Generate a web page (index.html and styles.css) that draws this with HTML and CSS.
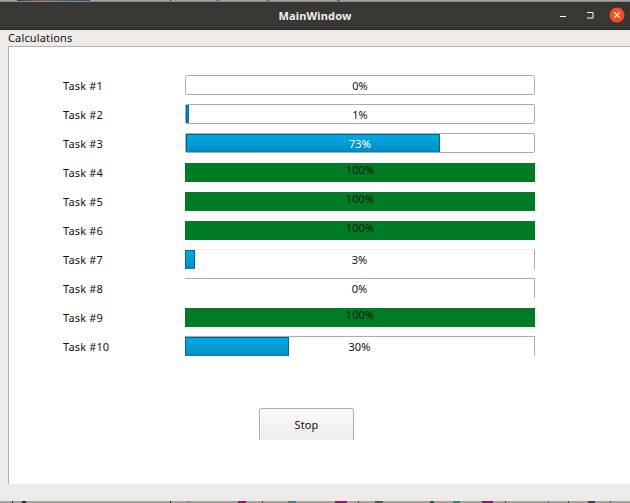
FILE: index.html
```html
<!DOCTYPE html>
<html>
<head>
  <title>MainWindow</title>
  <link rel="stylesheet" href="styles.css">
</head>
<body>
  <div class="desktop-strip strip-top"></div>
  <div class="window">
    <div class="titlebar">
      <span class="title">MainWindow</span>
      <div class="controls">
        <svg class="ctl" width="16" height="16" viewBox="0 0 16 16"><path d="M9 9.5h6" stroke="#fff" stroke-width="1" fill="none"/></svg>
        <svg class="ctl" width="16" height="16" viewBox="0 0 16 16"><path d="M7 5.5h6v5.5H7" stroke="#fff" stroke-width="1" fill="none"/></svg>
        <svg class="ctl" width="16" height="16" viewBox="0 0 16 16"><circle cx="8" cy="8" r="7.5" fill="#f04e23"/><path d="M5.4 5.4l5.2 5.2M10.6 5.4l-5.2 5.2" stroke="#fff" stroke-width="1.2" fill="none"/></svg>
      </div>
    </div>
    <div class="menubar"><span class="menu-item">Calculations</span></div>
    <div class="central">
      <div class="tasks">
        <div class="task"><span class="task-name">Task #1</span><div class="bar"><span class="pct">0%</span></div></div>
        <div class="task"><span class="task-name">Task #2</span><div class="bar"><div class="fill" style="width: 1%"></div><span class="pct">1%</span></div></div>
        <div class="task"><span class="task-name">Task #3</span><div class="bar"><div class="fill" style="width: 73%"></div><span class="pct on-fill">73%</span></div></div>
        <div class="task"><span class="task-name">Task #4</span><div class="bar done"><span class="pct">100%</span></div></div>
        <div class="task"><span class="task-name">Task #5</span><div class="bar done"><span class="pct">100%</span></div></div>
        <div class="task"><span class="task-name">Task #6</span><div class="bar done"><span class="pct">100%</span></div></div>
        <div class="task"><span class="task-name">Task #7</span><div class="bar faded-top"><div class="fill" style="width: 3%"></div><span class="pct">3%</span></div></div>
        <div class="task"><span class="task-name">Task #8</span><div class="bar open"><span class="pct">0%</span></div></div>
        <div class="task"><span class="task-name">Task #9</span><div class="bar done"><span class="pct">100%</span></div></div>
        <div class="task"><span class="task-name">Task #10</span><div class="bar open"><div class="fill" style="width: 29.7%"></div><span class="pct">30%</span></div></div>
      </div>
      <button class="stop" type="button">Stop</button>
    </div>
    <div class="statusbar"></div>
  </div>
  <div class="desktop-strip strip-bottom"></div>
</body>
</html>
```

FILE: styles.css
```css
html, body {
  margin: 0;
  padding: 0;
}
body {
  width: 630px;
  height: 503px;
  overflow: hidden;
  display: flex;
  flex-direction: column;
  background-color: #a5a3a0;
  font-family: "Noto Sans", sans-serif;
  font-size: 11px;
  letter-spacing: 0.15px;
  color: #111;
}
/* bits of whatever is behind the window */
.desktop-strip {
  flex: none;
  height: 1px;
  background-color: #a5a3a0;
}
.strip-top {
  background-image: linear-gradient(90deg,
    transparent 17px, #2d3a5a 17px, #8a5a4a 40px, #3a6a7a 60px, #5a3a6a 90px, transparent 90px,
    transparent 170px, #222 170px, #222 171px, transparent 171px,
    transparent 216px, #3a8a9a 216px, #3a8a9a 219px, transparent 219px,
    transparent 266px, #3a8a5a 266px, #3a8a5a 269px, transparent 269px,
    transparent 337px, #2a7a7a 337px, #2a7a7a 340px, transparent 340px);
}
.strip-bottom {
  height: 2px;
  background-image: linear-gradient(90deg,
    transparent 12px, #223 12px, #223 13px, transparent 13px,
    transparent 22px, #223 22px, #223 26px, transparent 26px,
    transparent 170px, #222 170px, #222 171px, transparent 171px,
    transparent 187px, #6a9a9a 187px, #6a9a9a 191px, transparent 191px,
    transparent 238px, #8a1a7a 238px, #8a1a7a 246px, transparent 246px,
    transparent 262px, #8a1a7a 262px, #8a1a7a 263px, transparent 263px,
    transparent 288px, #4a7a8a 288px, #4a7a8a 296px, transparent 296px,
    transparent 335px, #8a1a7a 335px, #8a1a7a 347px, transparent 347px,
    transparent 358px, #6a2a7a 358px, #6a2a7a 359px, transparent 359px,
    transparent 375px, #3a6a4a 375px, #3a6a4a 383px, transparent 383px,
    transparent 430px, #0a6a3a 430px, #0a6a3a 434px, transparent 434px,
    transparent 453px, #2a8a7a 453px, #2a8a7a 460px, transparent 460px,
    transparent 482px, #8a1a7a 482px, #8a1a7a 493px, transparent 493px,
    transparent 505px, #6a2a7a 505px, #6a2a7a 506px, transparent 506px,
    transparent 548px, #2a7a8a 548px, #2a7a8a 549px, transparent 549px,
    transparent 568px, #4a4a4a 568px, #4a4a4a 569px, transparent 569px,
    transparent 588px, #3a3a5a 588px, #3a3a5a 595px, transparent 595px,
    transparent 610px, #2a6a7a 610px, #2a6a7a 611px, transparent 611px);
}
.window {
  height: 500px;
  flex: none;
  display: flex;
  flex-direction: column;
  background-color: #eeeae7;
}
.titlebar {
  height: 29px;
  flex: none;
  box-sizing: border-box;
  border-top: 1px solid #8a8985;
  border-bottom: 1px solid #2a2926;
  background-color: #383734;
  display: flex;
  align-items: center;
  justify-content: center;
  position: relative;
}
.title {
  color: #f2f0ee;
  font-weight: 700;
  font-size: 11px;
}
.controls {
  position: absolute;
  right: 5px;
  top: 5px;
  display: flex;
  gap: 13px;
}
.menubar {
  height: 16px;
  flex: none;
  box-sizing: border-box;
  padding-left: 8px;
  line-height: 16px;
}
.central {
  height: 438px;
  flex: none;
  box-sizing: border-box;
  margin-left: 8px;
  border-left: 1px solid #b5b2ae;
  border-top: 1px solid #b5b2ae;
  background-color: #fff;
  padding-top: 28px;
  display: flex;
  flex-direction: column;
}
.tasks {
  display: flex;
  flex-direction: column;
  gap: 9px;
}
.task {
  display: flex;
  align-items: center;
  height: 20px;
  padding-left: 54px;
}
.task-name {
  width: 122px;
  flex: none;
}
.bar {
  width: 350px;
  height: 20px;
  box-sizing: border-box;
  border: 1px solid #aeacaa;
  border-radius: 2px;
  position: relative;
  display: flex;
  align-items: center;
  justify-content: center;
}
.bar.done {
  border: 0;
  border-radius: 0;
  height: 19px;
  background-color: #017c25;
  align-items: flex-start;
}
.bar.done .pct {
  line-height: 14px;
}
.bar.faded-top {
  border-top-color: #eeeeee;
  border-left: 0;
  border-bottom: 0;
  border-radius: 0;
}
.bar.open {
  border-left: 0;
  border-bottom: 0;
  border-radius: 0;
}
.fill {
  position: absolute;
  left: 0;
  top: 0;
  bottom: 0;
  min-width: 3px;
  box-sizing: border-box;
  border: 1px solid #01658f;
  border-bottom-color: #0282b5;
  background: linear-gradient(#00a9e6, #0290c4);
}
.pct {
  position: relative;
}
.on-fill {
  color: #fff;
}
.stop {
  align-self: flex-start;
  margin-left: 250px;
  margin-top: 52px;
  width: 95px;
  height: 32px;
  box-sizing: border-box;
  border: 1px solid #b3b0ac;
  border-bottom: 0;
  border-radius: 3px 3px 0 0;
  background: linear-gradient(#fbfafa, #efecea);
  font-family: "Noto Sans", sans-serif;
  font-size: 11px;
  letter-spacing: 0.15px;
  color: #111;
  padding: 0;
}
.statusbar {
  flex: 1;
}
```
